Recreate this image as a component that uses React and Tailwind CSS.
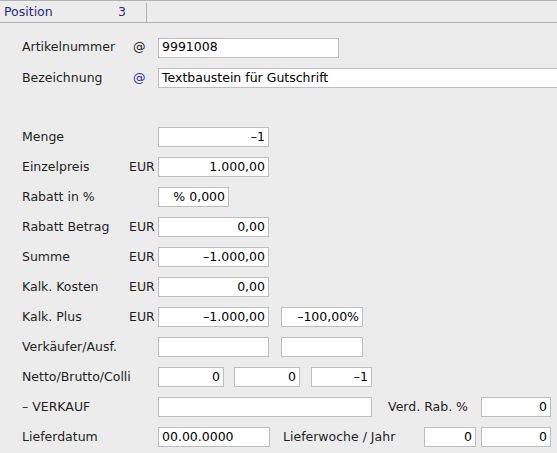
import React from "react";

const font = { fontFamily: '"DejaVu Sans", "Liberation Sans", sans-serif' };

function Field({ value = "", w, right = false }) {
    return (
        <div
            className={`h-[20px] shrink-0 bg-white border border-[#bdbdbd] flex items-center px-[3px] text-[12.5px] text-black whitespace-nowrap overflow-hidden ${right ? "justify-end" : "justify-start"}`}
            style={{ width: w }}
        >
            {value}
        </div>
    );
}

function Row({ label, unit, unitBlue, children, tall }) {
    return (
        <div className={`flex items-center ${tall ? "h-[31px]" : "h-[30px]"}`}>
            <span className="w-[107px] shrink-0 text-[12.5px] text-[#1e1e1e]">{label}</span>
            <span
                className={`w-[29px] shrink-0 text-[12.5px] ${unit === "@" ? "pl-[4px]" : ""} ${unitBlue ? "text-[#2e2e9c]" : "text-[#1e1e1e]"}`}
            >
                {unit}
            </span>
            {children}
        </div>
    );
}

export default function App() {
    return (
        <div className="w-[557px] h-[453px] overflow-hidden bg-[#ececec]" style={font}>
            {/* header */}
            <div className="h-[23px] border-t border-b border-[#b2b2b2] flex">
                <div className="w-[147px] mt-[2px] border-r border-[#b2b2b2] flex items-center pl-[4px] pr-[20px] justify-between text-[12.5px] text-[#2a2788]">
                    <span>Position</span>
                    <span>3</span>
                </div>
            </div>

            <div className="pl-[22px] pt-[9px]">
                <Row label="Artikelnummer" unit="@" tall>
                    <Field value="9991008" w={181} />
                </Row>
                <Row label="Bezeichnung" unit="@" unitBlue>
                    <Field value="Textbaustein für Gutschrift" w={420} />
                </Row>

                <div className="h-[29px]" />

                <Row label="Menge">
                    <Field value="–1" w={111} right />
                </Row>
                <Row label="Einzelpreis" unit="EUR">
                    <Field value="1.000,00" w={111} right />
                </Row>
                <Row label="Rabatt in %">
                    <Field value="% 0,000" w={71} right />
                </Row>
                <Row label="Rabatt Betrag" unit="EUR">
                    <Field value="0,00" w={111} right />
                </Row>
                <Row label="Summe" unit="EUR">
                    <Field value="–1.000,00" w={111} right />
                </Row>
                <Row label="Kalk. Kosten" unit="EUR">
                    <Field value="0,00" w={111} right />
                </Row>
                <Row label="Kalk. Plus" unit="EUR">
                    <Field value="–1.000,00" w={111} right />
                    <div className="w-[12px]" />
                    <Field value="–100,00%" w={82} right />
                </Row>
                <Row label="Verkäufer/Ausf.">
                    <Field w={111} />
                    <div className="w-[12px]" />
                    <Field w={82} />
                </Row>
                <Row label="Netto/Brutto/Colli">
                    <Field value="0" w={66} right />
                    <div className="w-[10px]" />
                    <Field value="0" w={66} right />
                    <div className="w-[11px]" />
                    <Field value="–1" w={61} right />
                </Row>
                <Row label="– VERKAUF">
                    <Field w={214} />
                    <span className="w-[109px] shrink-0 text-right pr-[13px] text-[12.5px] text-[#1e1e1e]">Verd. Rab. %</span>
                    <Field value="0" w={70} right />
                </Row>
                <Row label="Lieferdatum">
                    <Field value="00.00.0000" w={112} />
                    <span className="w-[154px] shrink-0 pl-[13px] text-[12.5px] text-[#1e1e1e]">Lieferwoche / Jahr</span>
                    <Field value="0" w={52} right />
                    <div className="w-[5px]" />
                    <Field value="0" w={70} right />
                </Row>
            </div>
        </div>
    );
}
